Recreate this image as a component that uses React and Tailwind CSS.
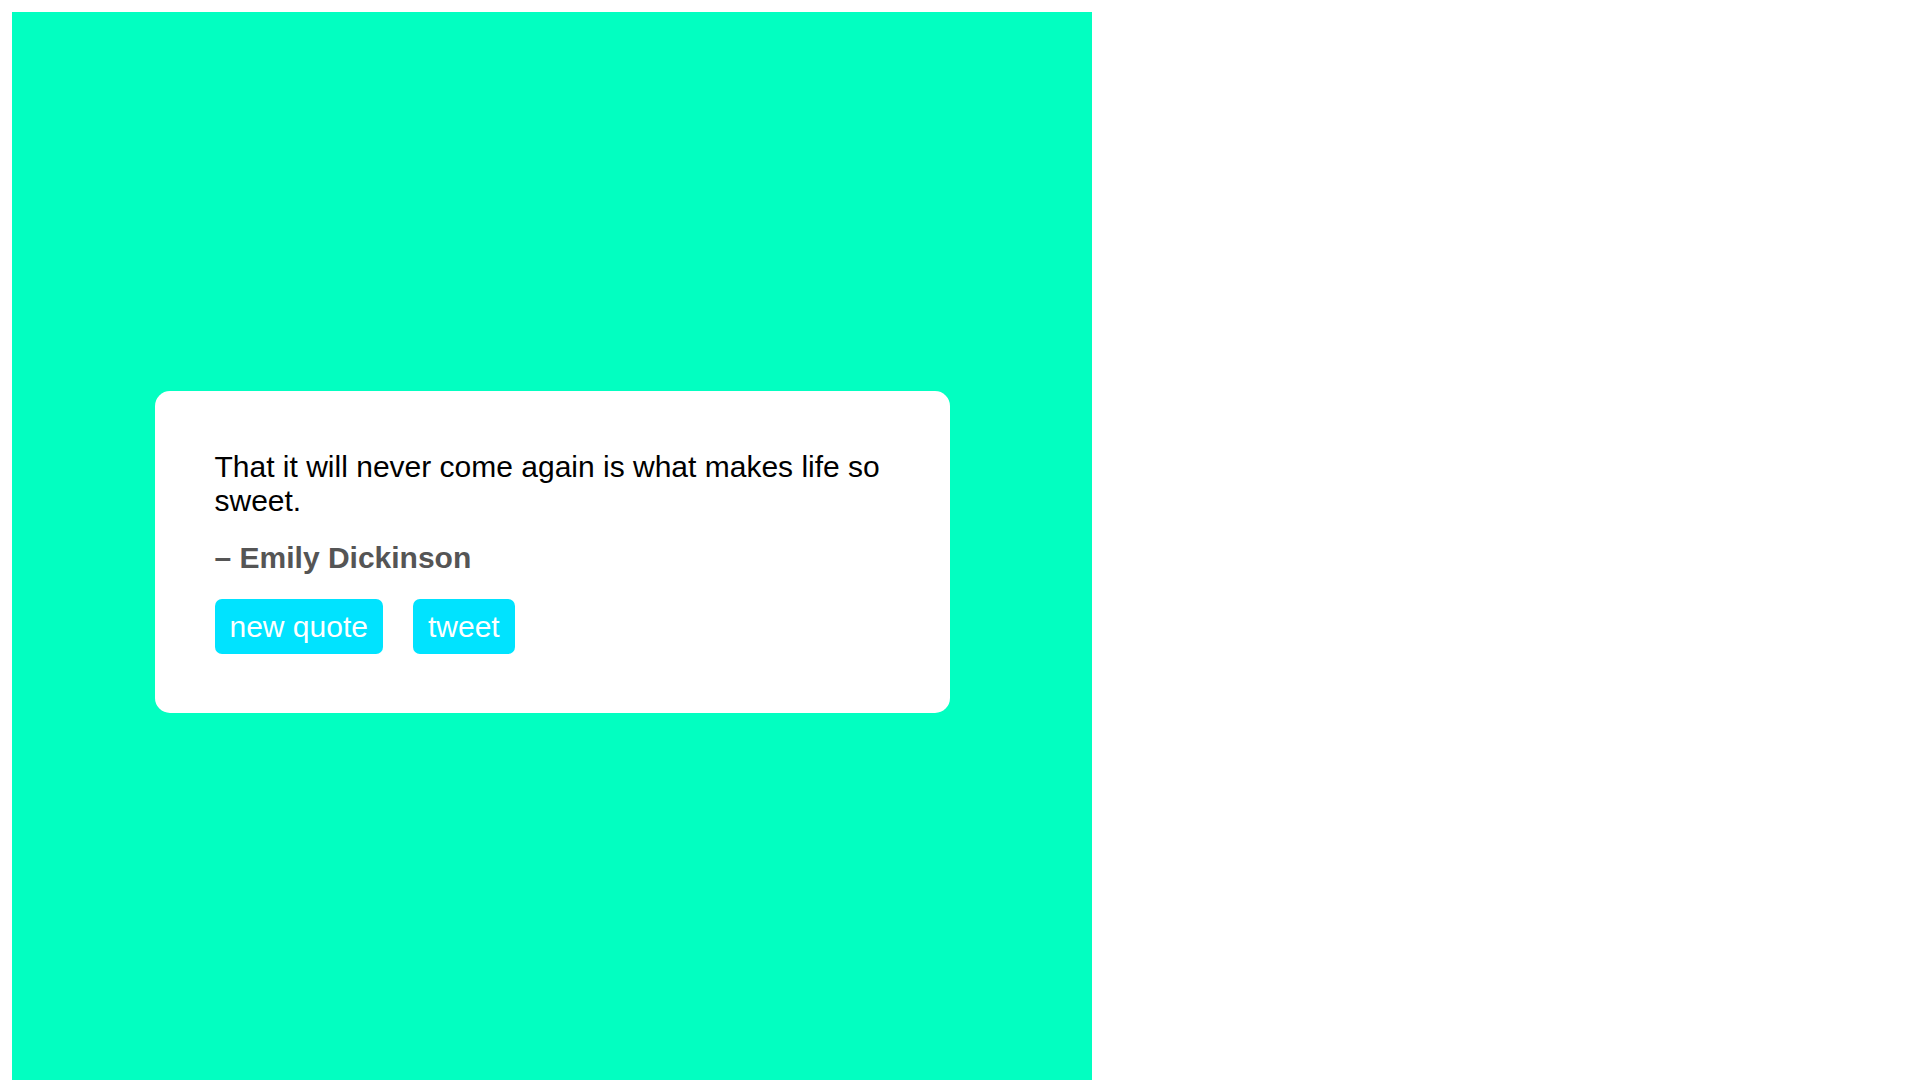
import React, { useState } from 'react';

const quotes = [
  { text: 'That it will never come again is what makes life so sweet.', author: 'Emily Dickinson' },
];

export default function App() {
  const [index] = useState(0);
  const quote = quotes[index];

  return (
    <div className="p-[12px] bg-white" style={{ fontFamily: '"Liberation Sans", Arial, sans-serif' }}>
      {/* Green square */}
      <div className="w-[1080px] h-[1080px] bg-[#02ffc1] flex items-center justify-center">
        {/* Quote card */}
        <div className="w-[795px] bg-white rounded-[15px] px-[60px] pt-[59px] pb-[59px]">
          <p className="text-[30px] leading-[34.5px] text-black mb-[22px]">{quote.text}</p>
          <p className="text-[30px] leading-[34.5px] font-bold text-[#555555] mb-[24px]">– {quote.author}</p>
          <div className="flex gap-[30px]">
            <button className="bg-[#00e3ff] text-white text-[30px] leading-[35px] px-[15px] py-[10px] rounded-[7px]">
              new quote
            </button>
            <button className="bg-[#00e3ff] text-white text-[30px] leading-[35px] px-[15px] py-[10px] rounded-[7px]">
              tweet
            </button>
          </div>
        </div>
      </div>
    </div>
  );
}
